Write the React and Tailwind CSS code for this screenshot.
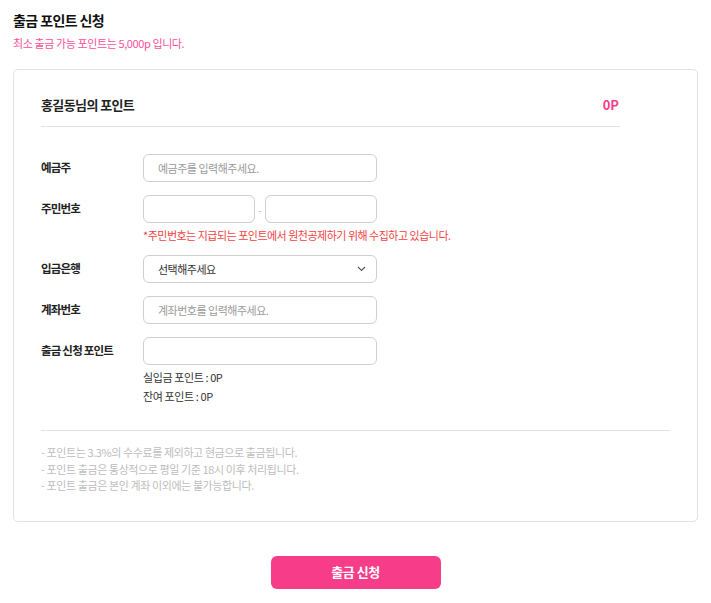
import React from "react";

const font = { fontFamily: '"Noto Sans CJK KR", "Noto Sans", sans-serif' };

function Row({ label, children }) {
  return (
    <div className="flex items-start">
      <div className="w-[102px] h-[28px] flex items-center text-[11.5px] font-bold text-[#222] tracking-[-0.8px]">
        {label}
      </div>
      <div className="flex flex-col">{children}</div>
    </div>
  );
}

function Input({ placeholder, w = "w-[234px]" }) {
  return (
    <input
      placeholder={placeholder}
      style={font}
      className={`${w} h-[28px] rounded-[6px] border border-[#cfcfcf] bg-white pl-[14px] text-[11px] tracking-[-0.5px] text-[#333] placeholder:text-[#9a9a9a] outline-none`}
    />
  );
}

export default function App() {
  return (
    <div style={font} className="w-[711px] h-[603px] bg-white pt-[10px] text-[#222]">
      <div className="px-[13px]">
        <h1 className="text-[14px] font-bold leading-[20px] tracking-[-0.6px] text-[#111]">출금 포인트 신청</h1>
        <p className="mt-[6px] text-[11px] leading-[14px] tracking-[-0.4px] text-[#fb4f98]">
          최소 출금 가능 포인트는 5,000p 입니다.
        </p>
      </div>

      <div className="mx-[13px] mt-[19px] rounded-[5px] border border-[#e3e3e3] px-[27px] pb-[27px]">
        <div className="mr-[50px] flex items-center justify-between border-b border-[#e3e3e3] pt-[24px] pb-[10px]">
          <span className="text-[13px] font-bold leading-[22px] tracking-[-0.6px] text-[#222]">홍길동님의 포인트</span>
          <span className="text-[13px] font-bold leading-[22px] text-[#fb3d8a] pr-[1px]">0P</span>
        </div>

        <div className="mt-[27px] flex flex-col gap-[13px]">
          <Row label="예금주">
            <Input placeholder="예금주를 입력해주세요." />
          </Row>
          <Row label="주민번호">
            <div className="flex items-center">
              <Input w="w-[112px]" />
              <span className="w-[10px] text-center text-[10px] text-[#bbb]">-</span>
              <Input w="w-[112px]" />
            </div>
            <p className="mt-[5px] text-[11px] leading-[14px] tracking-[-0.5px] text-[#f23f3f]">
              *주민번호는 지급되는 포인트에서 원천공제하기 위해 수집하고 있습니다.
            </p>
          </Row>
          <Row label="입금은행">
            <div className="relative w-[234px] h-[28px] rounded-[6px] border border-[#cfcfcf] flex items-center pl-[14px] text-[11px] tracking-[-0.5px] text-[#333]">
              선택해주세요
              <svg className="absolute right-[10px] top-[10px]" width="9" height="6" viewBox="0 0 9 6" fill="none">
                <path d="M1 1l3.5 3.5L8 1" stroke="#555" strokeWidth="1.1" />
              </svg>
            </div>
          </Row>
          <Row label="계좌번호">
            <Input placeholder="계좌번호를 입력해주세요." />
          </Row>
          <Row label="출금 신청 포인트">
            <Input />
            <div className="mt-[3px] text-[11px] leading-[19px] tracking-[-0.4px] text-[#333]">
              <p>실입금 포인트 : 0P</p>
              <p>잔여 포인트 : 0P</p>
            </div>
          </Row>
        </div>

        <div className="mt-[24px] border-t border-[#e3e3e3] pt-[13px] text-[11px] leading-[16.5px] tracking-[-0.4px] text-[#bdbdbd]">
          <p>- 포인트는 3.3%의 수수료를 제외하고 현금으로 출금됩니다.</p>
          <p>- 포인트 출금은 통상적으로 평일 기준 18시 이후 처리됩니다.</p>
          <p>- 포인트 출금은 본인 계좌 이외에는 불가능합니다.</p>
        </div>
      </div>

      <div className="mt-[34px] flex justify-center">
        <button style={font} className="w-[170px] h-[33px] rounded-[6px] bg-[#f73d8a] text-[13px] font-bold tracking-[-0.5px] text-white">
          출금 신청
        </button>
      </div>
    </div>
  );
}
